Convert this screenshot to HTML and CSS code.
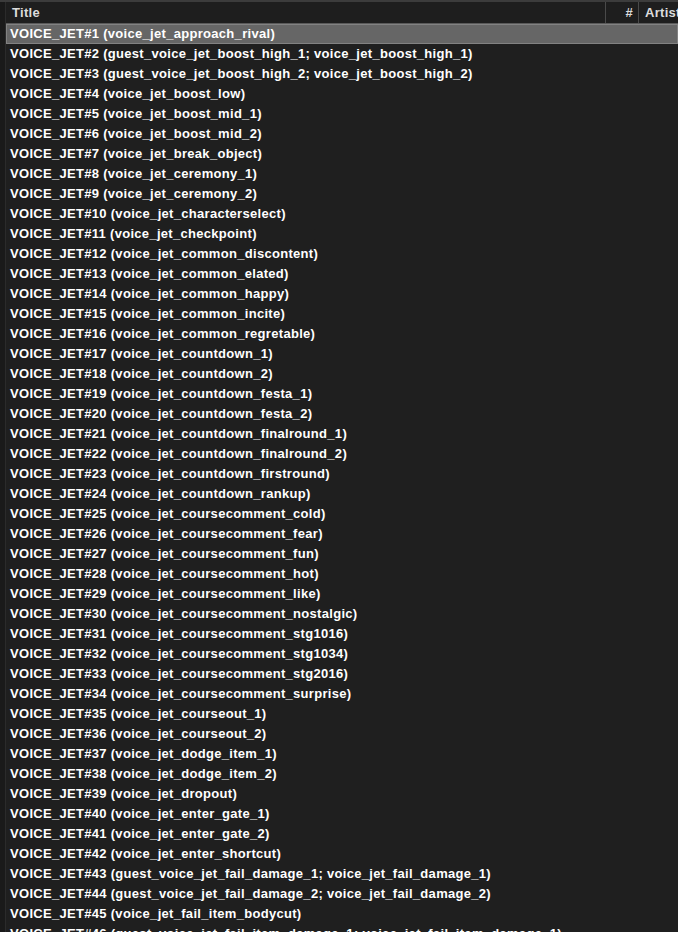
FILE: index.html
```html
<!DOCTYPE html>
<html>
<head>
<meta charset="utf-8">
<link rel="stylesheet" href="styles.css">
</head>
<body>
<div class="frame">
  <div class="gutter"></div>
  <div class="list">
    <div class="header">
      <div class="hcell title">Title</div>
      <div class="hcell num">#</div>
      <div class="hcell artist">Artist</div>
    </div>
    <div class="rows">
      <div class="row selected">VOICE_JET#1 (voice_jet_approach_rival)</div>
      <div class="row">VOICE_JET#2 (guest_voice_jet_boost_high_1; voice_jet_boost_high_1)</div>
      <div class="row">VOICE_JET#3 (guest_voice_jet_boost_high_2; voice_jet_boost_high_2)</div>
      <div class="row">VOICE_JET#4 (voice_jet_boost_low)</div>
      <div class="row">VOICE_JET#5 (voice_jet_boost_mid_1)</div>
      <div class="row">VOICE_JET#6 (voice_jet_boost_mid_2)</div>
      <div class="row">VOICE_JET#7 (voice_jet_break_object)</div>
      <div class="row">VOICE_JET#8 (voice_jet_ceremony_1)</div>
      <div class="row">VOICE_JET#9 (voice_jet_ceremony_2)</div>
      <div class="row">VOICE_JET#10 (voice_jet_characterselect)</div>
      <div class="row">VOICE_JET#11 (voice_jet_checkpoint)</div>
      <div class="row">VOICE_JET#12 (voice_jet_common_discontent)</div>
      <div class="row">VOICE_JET#13 (voice_jet_common_elated)</div>
      <div class="row">VOICE_JET#14 (voice_jet_common_happy)</div>
      <div class="row">VOICE_JET#15 (voice_jet_common_incite)</div>
      <div class="row">VOICE_JET#16 (voice_jet_common_regretable)</div>
      <div class="row">VOICE_JET#17 (voice_jet_countdown_1)</div>
      <div class="row">VOICE_JET#18 (voice_jet_countdown_2)</div>
      <div class="row">VOICE_JET#19 (voice_jet_countdown_festa_1)</div>
      <div class="row">VOICE_JET#20 (voice_jet_countdown_festa_2)</div>
      <div class="row">VOICE_JET#21 (voice_jet_countdown_finalround_1)</div>
      <div class="row">VOICE_JET#22 (voice_jet_countdown_finalround_2)</div>
      <div class="row">VOICE_JET#23 (voice_jet_countdown_firstround)</div>
      <div class="row">VOICE_JET#24 (voice_jet_countdown_rankup)</div>
      <div class="row">VOICE_JET#25 (voice_jet_coursecomment_cold)</div>
      <div class="row">VOICE_JET#26 (voice_jet_coursecomment_fear)</div>
      <div class="row">VOICE_JET#27 (voice_jet_coursecomment_fun)</div>
      <div class="row">VOICE_JET#28 (voice_jet_coursecomment_hot)</div>
      <div class="row">VOICE_JET#29 (voice_jet_coursecomment_like)</div>
      <div class="row">VOICE_JET#30 (voice_jet_coursecomment_nostalgic)</div>
      <div class="row">VOICE_JET#31 (voice_jet_coursecomment_stg1016)</div>
      <div class="row">VOICE_JET#32 (voice_jet_coursecomment_stg1034)</div>
      <div class="row">VOICE_JET#33 (voice_jet_coursecomment_stg2016)</div>
      <div class="row">VOICE_JET#34 (voice_jet_coursecomment_surprise)</div>
      <div class="row">VOICE_JET#35 (voice_jet_courseout_1)</div>
      <div class="row">VOICE_JET#36 (voice_jet_courseout_2)</div>
      <div class="row">VOICE_JET#37 (voice_jet_dodge_item_1)</div>
      <div class="row">VOICE_JET#38 (voice_jet_dodge_item_2)</div>
      <div class="row">VOICE_JET#39 (voice_jet_dropout)</div>
      <div class="row">VOICE_JET#40 (voice_jet_enter_gate_1)</div>
      <div class="row">VOICE_JET#41 (voice_jet_enter_gate_2)</div>
      <div class="row">VOICE_JET#42 (voice_jet_enter_shortcut)</div>
      <div class="row">VOICE_JET#43 (guest_voice_jet_fail_damage_1; voice_jet_fail_damage_1)</div>
      <div class="row">VOICE_JET#44 (guest_voice_jet_fail_damage_2; voice_jet_fail_damage_2)</div>
      <div class="row">VOICE_JET#45 (voice_jet_fail_item_bodycut)</div>
      <div class="row">VOICE_JET#46 (guest_voice_jet_fail_item_damage_1; voice_jet_fail_item_damage_1)</div>
    </div>
  </div>
</div>
</body>
</html>
```
FILE: styles.css
```css
html, body {
  margin: 0;
  padding: 0;
  background: #1f1f1f;
  overflow: hidden;
}
body {
  width: 678px;
  height: 932px;
  font-family: "Liberation Sans", Arial, sans-serif;
  font-size: 13px;
  font-weight: bold;
  letter-spacing: 0.3px;
  color: #ffffff;
}
.frame {
  display: flex;
  height: 932px;
  border-top: 2px solid #3c3c3c;
  box-sizing: border-box;
}
.gutter {
  width: 5px;
  flex: none;
  background: #1a1a1a;
  border-right: 1px solid #2b2b2b;
}
.list {
  flex: 1;
  min-width: 0;
  display: flex;
  flex-direction: column;
  overflow: hidden;
}
.header {
  display: flex;
  height: 21px;
  border-bottom: 1px solid #5a5a5a;
  background: #1e1e1e;
  flex: none;
}
.hcell {
  color: #dcdcdc;
  line-height: 21px;
  white-space: nowrap;
  overflow: hidden;
}
.title {
  width: 600px;
  padding-left: 6px;
  box-sizing: border-box;
  border-right: 1px solid #4a4a4a;
}
.num {
  width: 33px;
  text-align: right;
  padding-right: 5px;
  box-sizing: border-box;
  border-right: 1px solid #4a4a4a;
}
.artist {
  flex: 1;
  padding-left: 6px;
}
.rows {
  display: flex;
  flex-direction: column;
}
.row {
  height: 20px;
  line-height: 20px;
  padding-left: 4px;
  white-space: nowrap;
  box-sizing: border-box;
  flex: none;
}
.row.selected {
  background: #666666;
  border: 1px solid #828282;
  line-height: 18px;
  padding-left: 3px;
}
```
